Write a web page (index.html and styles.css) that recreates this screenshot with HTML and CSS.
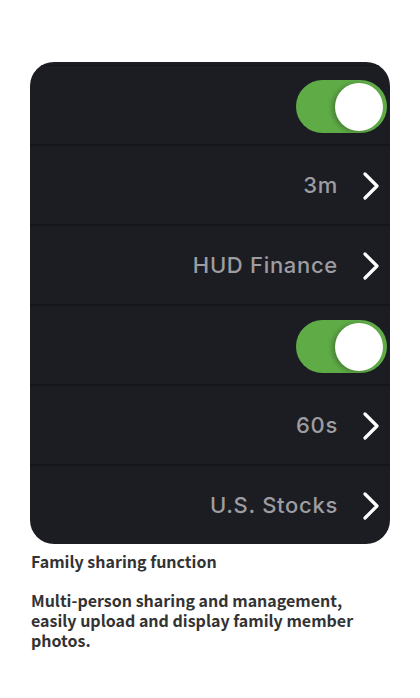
FILE: index.html
```html
<!DOCTYPE html>
<html lang="en">
<head>
    <meta charset="UTF-8">
    <meta name="viewport" content="width=device-width, initial-scale=1.0">
    <title>Family sharing function</title>
    <link rel="stylesheet" href="styles.css">
</head>
<body>

<div class="page">
    <div class="settings-card">
        <div class="setting-row">
            <span class="toggle on"><span class="knob"></span></span>
        </div>
        <div class="setting-row">
            <span class="value">3m</span>
            <svg class="chevron" width="18" height="28" viewBox="0 0 18 28">
                <path d="M3 2 L15 14 L3 26" />
            </svg>
        </div>
        <div class="setting-row">
            <span class="value">HUD Finance</span>
            <svg class="chevron" width="18" height="28" viewBox="0 0 18 28">
                <path d="M3 2 L15 14 L3 26" />
            </svg>
        </div>
        <div class="setting-row">
            <span class="toggle on"><span class="knob"></span></span>
        </div>
        <div class="setting-row">
            <span class="value">60s</span>
            <svg class="chevron" width="18" height="28" viewBox="0 0 18 28">
                <path d="M3 2 L15 14 L3 26" />
            </svg>
        </div>
        <div class="setting-row">
            <span class="value">U.S. Stocks</span>
            <svg class="chevron" width="18" height="28" viewBox="0 0 18 28">
                <path d="M3 2 L15 14 L3 26" />
            </svg>
        </div>
    </div>

    <div class="caption">
        <h3>Family sharing function</h3>
        <p>Multi-person sharing and management, easily upload and display family member photos.</p>
    </div>
</div>

</body>
</html>
```

FILE: styles.css
```css
body {
    margin: 0;
    background-color: #fff;
    font-family: "Noto Sans CJK SC", "Noto Sans", sans-serif;
}
.page {
    padding: 62px 30px 0 30px;
}
.settings-card {
    width: 360px;
    background-color: #1c1c23;
    border-radius: 24px;
    overflow: hidden;
    padding-top: 3px;
}
.setting-row {
    height: 78px;
    border-top: 2px solid #15151a;
    display: flex;
    align-items: center;
    justify-content: flex-end;
    padding-right: 10px;
}
.setting-row:first-child {
    border-top-width: 1px;
}
.value {
    font-family: Inter, "Liberation Sans", sans-serif;
    font-size: 22px;
    font-weight: 500;
    letter-spacing: 0.7px;
    color: #9d9da1;
    margin-right: 24px;
}
.chevron {
    display: block;
    margin-top: 2px;
}
.chevron path {
    fill: none;
    stroke: #fff;
    stroke-width: 3.2;
    stroke-linecap: round;
    stroke-linejoin: round;
}
.toggle {
    position: relative;
    display: block;
    width: 91px;
    height: 53px;
    border-radius: 27px;
    background-color: #5fac47;
    margin-right: -7px;
    margin-top: 2px;
}
.toggle .knob {
    position: absolute;
    top: 3px;
    right: 4px;
    width: 48px;
    height: 48px;
    border-radius: 50%;
    background-color: #fff;
    box-shadow: -3px 1px 5px rgba(0, 0, 0, 0.25);
}
.caption {
    color: #333;
    padding-left: 1px;
}
.caption h3 {
    font-size: 16px;
    font-weight: bold;
    margin: 6px 0 0 0;
    line-height: 22px;
}
.caption p {
    font-size: 16px;
    font-weight: bold;
    margin: 18px 0 0 0;
    line-height: 20px;
    width: 340px;
}
```
